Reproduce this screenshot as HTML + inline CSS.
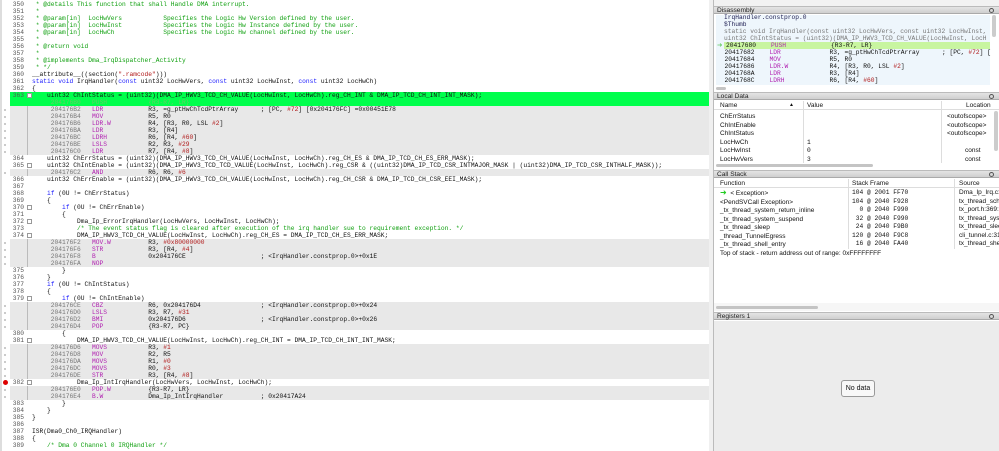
<!DOCTYPE html>
<html><head><meta charset="utf-8"><style>
*{margin:0;padding:0;box-sizing:border-box}
body{width:999px;height:451px;overflow:hidden;background:#fff;position:relative;font-family:"Liberation Mono",monospace;font-size:6.25px;color:#111}
#code{position:absolute;left:0;top:0;width:709px;height:451px;overflow:hidden;background:#fff;border-left:2px solid #ddd}
.r{position:relative;height:7px;line-height:7px;white-space:pre}
.r .ln{position:absolute;left:4px;width:18px;text-align:right;color:#555}
.r .t{position:absolute;left:30px}
.d{background:#e8e8e8;margin-left:8px}
.d .ln{display:none}
.d .t{left:22px}
.d::before{content:"";position:absolute;left:-6px;top:3px;width:2px;height:2px;border-radius:1px;background:#bbb}
.d::after{content:"";position:absolute;left:17px;top:0;width:1px;height:7px;background:#bbb}
.g{background:#00ff4c;margin-left:8px}
.g .ln{left:-4px}
.g .t{left:22px}
.fb{position:absolute;left:25px;top:1px;width:5px;height:5px;border:1px solid #999;background:#fff}
.k{color:#1a1aff}.c{color:#10a010}.m{color:#b020b0}.n{color:#b01818}.a{color:#777}.s{color:#b01818}
.g .a,.g .m,.g .o{color:#6c6}
.bp{position:absolute;left:1px;top:1px;width:5px;height:5px;border-radius:3px;background:#d00}
#rp{position:absolute;left:713px;top:0;width:286px;height:451px;background:#fff;border-left:1px solid #bbb;font-family:"Liberation Sans",sans-serif}
.hd{position:absolute;left:0;width:286px;height:8px;background:linear-gradient(#e4e4e4,#cfcfcf);border-top:1px solid #bbb;border-bottom:1px solid #aaa;font-size:6.6px;line-height:7px;padding-left:3px;color:#222}
.hd::after{content:"";position:absolute;right:6px;top:1px;width:3px;height:3px;border:1px solid #555;border-radius:3px}
.tx{position:absolute;font-size:6.5px;white-space:pre;line-height:8px;color:#111}
.mono{font-family:"Liberation Mono",monospace;font-size:6.25px}
.sb{position:absolute;height:3px;background:#c4c4c4;border-radius:2px}
</style></head><body>
<div id="code">
<div style="height:1px"></div>
<div class="r"><span class="ln">350</span><span class="t c"> * @details This function that shall Handle DMA interrupt.</span></div>
<div class="r"><span class="ln">351</span><span class="t c"> *</span></div>
<div class="r"><span class="ln">352</span><span class="t c"> * @param[in]  LocHwVers           Specifies the Logic Hw Version defined by the user.</span></div>
<div class="r"><span class="ln">353</span><span class="t c"> * @param[in]  LocHwInst           Specifies the Logic Hw Instance defined by the user.</span></div>
<div class="r"><span class="ln">354</span><span class="t c"> * @param[in]  LocHwCh             Specifies the Logic Hw channel defined by the user.</span></div>
<div class="r"><span class="ln">355</span><span class="t c"> *</span></div>
<div class="r"><span class="ln">356</span><span class="t c"> * @return void</span></div>
<div class="r"><span class="ln">357</span><span class="t c"> *</span></div>
<div class="r"><span class="ln">358</span><span class="t c"> * @implements Dma_IrqDispatcher_Activity</span></div>
<div class="r"><span class="ln">359</span><span class="t c"> * */</span></div>
<div class="r"><span class="ln">360</span><span class="t">__attribute__((section(<span class="s">".ramcode"</span>)))</span></div>
<div class="r"><span class="ln">361</span><span class="t"><span class="k">static void</span> IrqHandler(<span class="k">const</span> uint32 LocHwVers, <span class="k">const</span> uint32 LocHwInst, <span class="k">const</span> uint32 LocHwCh)</span></div>
<div class="r"><span class="ln">362</span><span class="t">{</span></div>
<div class="r g"><span class="ln" style="color:#555">363</span><span class="fb" style="left:17px"></span><span class="t">    uint32 ChIntStatus = (uint32)(DMA_IP_HWV3_TCD_CH_VALUE(LocHwInst, LocHwCh).reg_CH_INT &amp; DMA_IP_TCD_CH_INT_INT_MASK);</span></div>
<div class="r g"><span class="t"><span class="a">     204176B0   </span><span class="m">PUSH           </span><span class="o">{R3-R7, LR}</span></span></div>
<div class="r d"><span class="t"><span class="a">     204176B2   </span><span class="m">LDR            </span>R3, =g_ptHwChTcdPtrArray      ; [PC, <span class="n">#72</span>] [0x204176FC] =0x00451E78</span></div>
<div class="r d"><span class="t"><span class="a">     204176B4   </span><span class="m">MOV            </span>R5, R0</span></div>
<div class="r d"><span class="t"><span class="a">     204176B6   </span><span class="m">LDR.W          </span>R4, [R3, R0, LSL <span class="n">#2</span>]</span></div>
<div class="r d"><span class="t"><span class="a">     204176BA   </span><span class="m">LDR            </span>R3, [R4]</span></div>
<div class="r d"><span class="t"><span class="a">     204176BC   </span><span class="m">LDRH           </span>R6, [R4, <span class="n">#60</span>]</span></div>
<div class="r d"><span class="t"><span class="a">     204176BE   </span><span class="m">LSLS           </span>R2, R3, <span class="n">#29</span></span></div>
<div class="r d"><span class="t"><span class="a">     204176C0   </span><span class="m">LDR            </span>R7, [R4, <span class="n">#8</span>]</span></div>
<div class="r"><span class="ln">364</span><span class="t">    uint32 ChErrStatus = (uint32)(DMA_IP_HWV3_TCD_CH_VALUE(LocHwInst, LocHwCh).reg_CH_ES &amp; DMA_IP_TCD_CH_ES_ERR_MASK);</span></div>
<div class="r"><span class="ln">365</span><span class="fb"></span><span class="t">    uint32 ChIntEnable = (uint32)(DMA_IP_HWV3_TCD_TCD_VALUE(LocHwInst, LocHwCh).reg_CSR &amp; ((uint32)DMA_IP_TCD_CSR_INTMAJOR_MASK | (uint32)DMA_IP_TCD_CSR_INTHALF_MASK));</span></div>
<div class="r d"><span class="t"><span class="a">     204176C2   </span><span class="m">AND            </span>R6, R6, <span class="n">#6</span></span></div>
<div class="r"><span class="ln">366</span><span class="t">    uint32 ChErrEnable = (uint32)(DMA_IP_HWV3_TCD_CH_VALUE(LocHwInst, LocHwCh).reg_CH_CSR &amp; DMA_IP_TCD_CH_CSR_EEI_MASK);</span></div>
<div class="r"><span class="ln">367</span><span class="t"></span></div>
<div class="r"><span class="ln">368</span><span class="t">    <span class="k">if</span> (0U != ChErrStatus)</span></div>
<div class="r"><span class="ln">369</span><span class="t">    {</span></div>
<div class="r"><span class="ln">370</span><span class="fb"></span><span class="t">        <span class="k">if</span> (0U != ChErrEnable)</span></div>
<div class="r"><span class="ln">371</span><span class="t">        {</span></div>
<div class="r"><span class="ln">372</span><span class="fb"></span><span class="t">            Dma_Ip_ErrorIrqHandler(LocHwVers, LocHwInst, LocHwCh);</span></div>
<div class="r"><span class="ln">373</span><span class="t c">            /* The event status flag is cleared after execution of the irq handler sue to requirement exception. */</span></div>
<div class="r"><span class="ln">374</span><span class="fb"></span><span class="t">            DMA_IP_HWV3_TCD_CH_VALUE(LocHwInst, LocHwCh).reg_CH_ES = DMA_IP_TCD_CH_ES_ERR_MASK;</span></div>
<div class="r d"><span class="t"><span class="a">     204176F2   </span><span class="m">MOV.W          </span>R3, <span class="n">#0x80000000</span></span></div>
<div class="r d"><span class="t"><span class="a">     204176F6   </span><span class="m">STR            </span>R3, [R4, <span class="n">#4</span>]</span></div>
<div class="r d"><span class="t"><span class="a">     204176F8   </span><span class="m">B              </span>0x204176CE                    ; &lt;IrqHandler.constprop.0&gt;+0x1E</span></div>
<div class="r d"><span class="t"><span class="a">     204176FA   </span><span class="m">NOP</span></span></div>
<div class="r"><span class="ln">375</span><span class="t">        }</span></div>
<div class="r"><span class="ln">376</span><span class="t">    }</span></div>
<div class="r"><span class="ln">377</span><span class="t">    <span class="k">if</span> (0U != ChIntStatus)</span></div>
<div class="r"><span class="ln">378</span><span class="t">    {</span></div>
<div class="r"><span class="ln">379</span><span class="fb"></span><span class="t">        <span class="k">if</span> (0U != ChIntEnable)</span></div>
<div class="r d"><span class="t"><span class="a">     204176CE   </span><span class="m">CBZ            </span>R6, 0x204176D4                ; &lt;IrqHandler.constprop.0&gt;+0x24</span></div>
<div class="r d"><span class="t"><span class="a">     204176D0   </span><span class="m">LSLS           </span>R3, R7, <span class="n">#31</span></span></div>
<div class="r d"><span class="t"><span class="a">     204176D2   </span><span class="m">BMI            </span>0x204176D6                    ; &lt;IrqHandler.constprop.0&gt;+0x26</span></div>
<div class="r d"><span class="t"><span class="a">     204176D4   </span><span class="m">POP            </span>{R3-R7, PC}</span></div>
<div class="r"><span class="ln">380</span><span class="t">        {</span></div>
<div class="r"><span class="ln">381</span><span class="fb"></span><span class="t">            DMA_IP_HWV3_TCD_CH_VALUE(LocHwInst, LocHwCh).reg_CH_INT = DMA_IP_TCD_CH_INT_INT_MASK;</span></div>
<div class="r d"><span class="t"><span class="a">     204176D6   </span><span class="m">MOVS           </span>R3, <span class="n">#1</span></span></div>
<div class="r d"><span class="t"><span class="a">     204176D8   </span><span class="m">MOV            </span>R2, R5</span></div>
<div class="r d"><span class="t"><span class="a">     204176DA   </span><span class="m">MOVS           </span>R1, <span class="n">#0</span></span></div>
<div class="r d"><span class="t"><span class="a">     204176DC   </span><span class="m">MOVS           </span>R0, <span class="n">#3</span></span></div>
<div class="r d"><span class="t"><span class="a">     204176DE   </span><span class="m">STR            </span>R3, [R4, <span class="n">#8</span>]</span></div>
<div class="r"><span class="bp"></span><span class="ln">382</span><span class="fb"></span><span class="t">            Dma_Ip_IntIrqHandler(LocHwVers, LocHwInst, LocHwCh);</span></div>
<div class="r d"><span class="t"><span class="a">     204176E0   </span><span class="m">POP.W          </span>{R3-R7, LR}</span></div>
<div class="r d"><span class="t"><span class="a">     204176E4   </span><span class="m">B.W            </span>Dma_Ip_IntIrqHandler          ; 0x20417A24</span></div>
<div class="r"><span class="ln">383</span><span class="t">        }</span></div>
<div class="r"><span class="ln">384</span><span class="t">    }</span></div>
<div class="r"><span class="ln">385</span><span class="t">}</span></div>
<div class="r"><span class="ln">386</span><span class="t"></span></div>
<div class="r"><span class="ln">387</span><span class="t">ISR(Dma0_Ch0_IRQHandler)</span></div>
<div class="r"><span class="ln">388</span><span class="t">{</span></div>
<div class="r"><span class="ln">389</span><span class="t c">    /* Dma 0 Channel 0 IRQHandler */</span></div>
</div>
<div style="position:absolute;left:709px;top:0;width:4px;height:451px;background:#f0f0f0"></div>

<div id="rp">
<div style="position:absolute;left:0;top:0;width:286px;height:6px;background:#f2f2f2"></div>
<div class="hd" style="top:6px">Disassembly</div>
<div style="position:absolute;left:2px;top:15px;width:274px;height:70px;background:#eef6fc"></div>
<div style="position:absolute;left:278px;top:15px;width:4px;height:22px;background:#ccc;border-radius:2px"></div>
<div class="tx mono" style="left:10px;top:14px;line-height:7px;color:#225">IrqHandler.constprop.0
$Thumb
<span style="color:#777">static void IrqHandler(const uint32 LocHwVers, const uint32 LocHwInst,
uint32 ChIntStatus = (uint32)(DMA_IP_HWV3_TCD_CH_VALUE(LocHwInst, LocH</span></div>
<div style="position:absolute;left:10px;top:42px;width:266px;height:7px;background:#c8f5a0"></div>
<div class="tx mono" style="left:3px;top:42px;line-height:7px;color:#111"><span style="color:#6c6">➜</span> 20417680    <span class="m">PUSH</span>            {R3-R7, LR}
  20417682    <span class="m">LDR</span>             R3, =g_ptHwChTcdPtrArray      ; [PC, <span class="n">#72</span>] [
  20417684    <span class="m">MOV</span>             R5, R0
  20417686    <span class="m">LDR.W</span>           R4, [R3, R0, LSL <span class="n">#2</span>]
  2041768A    <span class="m">LDR</span>             R3, [R4]
  2041768C    <span class="m">LDRH</span>            R6, [R4, <span class="n">#60</span>]</div>
<div class="sb" style="left:2px;top:87px;width:10px"></div>

<div class="hd" style="top:92px">Local Data</div>
<div style="position:absolute;left:0;top:101px;width:286px;height:9px;border-bottom:1px solid #ddd"></div>
<div style="position:absolute;left:89px;top:101px;width:1px;height:62px;background:#ddd"></div>
<div style="position:absolute;left:227px;top:101px;width:1px;height:62px;background:#ddd"></div>
<div class="tx" style="left:6px;top:102px">Name</div>
<div class="tx" style="left:75px;top:101px;font-size:5px">▲</div>
<div class="tx" style="left:93px;top:102px">Value</div>
<div class="tx" style="left:252px;top:102px">Location</div>
<div class="tx" style="left:6px;top:113px;line-height:8.6px">ChErrStatus
ChIntEnable
ChIntStatus
LocHwCh
LocHwInst
LocHwVers</div>
<div class="tx mono" style="left:93px;top:113px;line-height:8.6px">


1
0
3</div>
<div class="tx" style="left:233px;top:113px;line-height:8.6px">&lt;outofscope&gt;
&lt;outofscope&gt;
&lt;outofscope&gt;

          const
          const</div>
<div style="position:absolute;left:280px;top:111px;width:4px;height:40px;background:#ccc;border-radius:2px"></div>
<div class="sb" style="left:2px;top:164px;width:157px"></div>

<div class="hd" style="top:170px">Call Stack</div>
<div style="position:absolute;left:0;top:179px;width:286px;height:9px;border-bottom:1px solid #ddd"></div>
<div style="position:absolute;left:134px;top:179px;width:1px;height:70px;background:#ddd"></div>
<div style="position:absolute;left:240px;top:179px;width:1px;height:70px;background:#ddd"></div>
<div class="tx" style="left:6px;top:180px">Function</div>
<div class="tx" style="left:138px;top:180px">Stack Frame</div>
<div class="tx" style="left:245px;top:180px">Source</div>
<div class="tx" style="left:6px;top:189px;line-height:8.5px"><span style="color:#2c2;font-size:8px">➜</span>  &lt; Exception&gt;
&lt;PendSVCall Exception&gt;
_tx_thread_system_return_inline
_tx_thread_system_suspend
_tx_thread_sleep
_thread_TunnelEgress
_tx_thread_shell_entry
Top of stack - return address out of range: 0xFFFFFFFF</div>
<div class="tx mono" style="left:138px;top:189px;line-height:8.5px">104 @ 2001 FF70
104 @ 2040 F928
  0 @ 2040 F990
 32 @ 2040 F990
 24 @ 2040 F9B0
120 @ 2040 F9C8
 16 @ 2040 FA40</div>
<div class="tx" style="left:245px;top:189px;line-height:8.5px">Dma_Ip_Irq.c:3
tx_thread_sche
tx_port.h:369:
tx_thread_syst
tx_thread_sleep
cli_tunnel.c:31
tx_thread_shel</div>
<div style="position:absolute;left:0;top:303px;width:286px;height:8px;background:#f6f6f6"></div>
<div class="sb" style="left:2px;top:306px;width:102px"></div>

<div class="hd" style="top:312px">Registers 1</div>
<div style="position:absolute;left:0;top:321px;width:286px;height:130px;background:#ececec"></div>
<div style="position:absolute;left:127px;top:380px;width:34px;height:17px;border:1px solid #999;border-radius:3px;background:#f8f8f8;font-size:7px;line-height:15px;text-align:center;color:#111">No data</div>
</div>
</body></html>
